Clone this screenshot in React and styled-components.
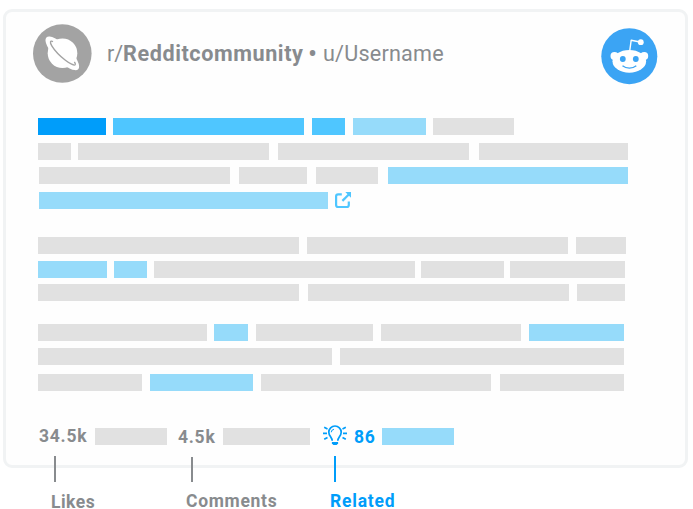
import React from "react";
import styled, { createGlobalStyle } from "styled-components";

const GlobalStyle = createGlobalStyle`
  * { box-sizing: border-box; }
  body { margin: 0; background: #fff; }
`;

const tones = { grey: "#e1e1e1", pale: "#96dbfa", sky: "#4fc6ff", blue: "#009dfa" };

const Page = styled.main`
  width: 693px;
  height: 509px;
  padding: 9px 0 0 3px;
  font-family: Roboto, "Liberation Sans", sans-serif;
  color: #888b8e;
`;
const Card = styled.article`
  width: 685px;
  height: 459px;
  border: 3px solid #f1f3f4;
  border-radius: 9px;
  background: #fefefe;
`;
const Header = styled.header`
  display: flex;
  height: 106px;
  padding: 12px 27px 0 27px;
`;
const Title = styled.h1`
  display: flex;
  margin: 17px 0 0 15px;
  font-size: 21.6px;
  line-height: 26px;
  font-weight: 400;
  white-space: pre;
`;
const Part = styled.span`
  width: ${(p) => p.$w}px;
  letter-spacing: ${(p) => p.$ls || 0}px;
  font-weight: ${(p) => (p.$bold ? 700 : 400)};
`;
const Dot = styled(Part)`
  font-size: 27px;
`;
const RedditSlot = styled.div`
  margin: 4px 0 0 auto;
`;
const Line = styled.div`
  display: flex;
  height: 17px;
  margin: 0 0 ${(p) => p.$after}px 32px;
`;
const Bar = styled.span`
  flex: none;
  width: ${(p) => p.$w}px;
  height: 17px;
  margin-left: ${(p) => p.$gap}px;
  background: ${(p) => tones[p.$tone || "grey"]};
`;
const LinkIcon = styled.svg`
  display: block;
  margin-left: 7px;
`;
const Stats = styled.footer`
  display: flex;
  height: 17px;
  margin: 37px 0 0 33px;
`;
const Count = styled.strong`
  flex: none;
  width: ${(p) => p.$w}px;
  margin-top: ${(p) => p.$top || 0}px;
  margin-left: ${(p) => p.$gap || 0}px;
  font-size: 17.5px;
  line-height: 17px;
  letter-spacing: 0.75px;
  color: ${(p) => (p.$active ? tones.blue : "inherit")};
  white-space: nowrap;
`;
const Bulb = styled.svg`
  flex: none;
  margin: -3px 6px 0 12px;
`;
const Callouts = styled.div`
  display: grid;
  grid-template-columns: 135px 144px 100px;
  margin: -12px 0 0 48px;
`;
const Callout = styled.div`
  position: relative;
  color: ${(p) => (p.$active ? tones.blue : "inherit")};
`;
const Stem = styled.div`
  width: 2px;
  height: ${(p) => p.$h}px;
  margin: ${(p) => 26 - p.$h}px 0 0 ${(p) => p.$x}px;
  background: currentColor;
`;
const Label = styled.div`
  margin-top: ${(p) => p.$top}px;
  font-size: 17.5px;
  font-weight: 700;
  line-height: 14px;
  letter-spacing: ${(p) => p.$ls || 0}px;
`;

const lines = [
  { after: 8, bars: [[0, 68, "blue"], [7, 191.4, "sky"], [7.6, 33, "sky"], [8, 73, "pale"], [7, 81]] },
  { after: 7, bars: [[0, 33], [7, 191.4], [8.6, 191.4], [9.6, 149]] },
  { after: 8, bars: [[1, 191.4], [8.6, 68], [9, 62], [10, 240, "pale"]] },
  { after: 28, bars: [[1, 289, "pale"]], link: true },
  { after: 7, bars: [[0, 261], [8, 261], [8, 50]] },
  { after: 6, bars: [[0, 69, "pale"], [7, 33, "pale"], [7, 261], [6, 83], [6, 115]] },
  { after: 23, bars: [[0, 261], [9, 261], [8, 48]] },
  { after: 7, bars: [[0, 169], [7, 34, "pale"], [8, 117], [8, 140], [8, 95, "pale"]] },
  { after: 9, bars: [[0, 294], [7.5, 284.5]] },
  { after: 0, bars: [[0, 104], [8, 103, "pale"], [8, 230], [9, 124]] },
];

function Planet() {
  return (
    <svg width="59" height="59" viewBox="0 0 59 59" fill="none">
      <circle cx="29.3" cy="29.5" r="29.3" fill="#a3a3a3" />
      <circle cx="29.5" cy="29.3" r="14.8" fill="#fff" />
      <ellipse cx="29.3" cy="29.3" rx="22.5" ry="7.8" transform="rotate(45 29.3 29.3)" fill="#fff" />
      <path d="M20 17.6C17.2 16.2 16.6 18.2 18.8 21.8C21.6 26.4 26.8 31.9 32.4 36.2C36.8 39.6 41.4 42 42.2 40.6C42.6 39.8 42 38.7 41.4 37.8" stroke="#a3a3a3" strokeWidth="1.4" />
    </svg>
  );
}

function Alien() {
  return (
    <svg width="57" height="57" viewBox="0 0 57 57" fill="none">
      <circle cx="28.3" cy="28.2" r="28" fill="#3ba4f4" />
      <path d="M28.7 23L30.2 12.2L39 14" stroke="#fff" strokeWidth="1.4" strokeLinejoin="round" />
      <circle cx="39.8" cy="14.2" r="2.9" fill="#fff" />
      <circle cx="13.5" cy="28" r="4" fill="#fff" />
      <circle cx="43.2" cy="28" r="4" fill="#fff" />
      <ellipse cx="28.3" cy="33.3" rx="16.8" ry="11.4" fill="#fff" />
      <ellipse cx="21.8" cy="31" rx="2.9" ry="3" fill="#3ba4f4" />
      <ellipse cx="34.8" cy="31" rx="2.9" ry="3" fill="#3ba4f4" />
      <path d="M21.5 37.8C25.3 40.9 31.5 40.9 35.3 37.8" stroke="#3ba4f4" strokeWidth="1.4" />
    </svg>
  );
}

export default function App() {
  return (
    <Page>
      <GlobalStyle />
      <Card>
        <Header>
          <Planet />
          <Title>
            <Part $w={16}>r/</Part>
            <Part $bold $w={185} $ls={0.58}>Redditcommunity</Part>
            <Dot $w={15}>•</Dot>
            <Part $w={122} $ls={0.2}>u/Username</Part>
          </Title>
          <RedditSlot><Alien /></RedditSlot>
        </Header>
        {lines.map((line, i) => (
          <Line key={i} $after={line.after}>
            {line.bars.map(([gap, w, tone], j) => <Bar key={j} $gap={gap} $w={w} $tone={tone} />)}
            {line.link && (
              <LinkIcon width="17" height="17" viewBox="0 0 17 17" fill="none" stroke={tones.sky} strokeWidth="2.2">
                <path d="M6.8 2.3H3.1Q1.1 2.3 1.1 4.3V13Q1.1 15 3.1 15H11.8Q13.8 15 13.8 13V9.5" />
                <path d="M7.4 8.9L14 2.3" />
                <path d="M10.3 0H16V5.7Z" fill={tones.sky} stroke="none" />
              </LinkIcon>
            )}
          </Line>
        ))}
        <Stats>
          <Count $w={56}>34.5k</Count>
          <Bar $gap={0} $w={72} />
          <Count $gap={11} $w={45} $top={1}>4.5k</Count>
          <Bar $gap={0} $w={87} />
          <Bulb width="26" height="22" viewBox="0 0 26 22" fill="none" stroke={tones.blue} strokeWidth="1.7">
            <path d="M10.2 15.8C10.2 12.2 6.8 11.3 6.8 7.2A6.2 6.2 0 0 1 19.2 7.2C19.2 11.3 15.8 12.2 15.8 15.8" />
            <path d="M9.2 7.2Q9.5 4.8 12 4.3" strokeWidth="1.1" />
            <path d="M9.9 16.9H16.1V18.4L14.6 20H11.4L9.9 18.4Z" fill={tones.blue} stroke="none" />
            <path d="M1 8.3H5M21 8.3H25M2.2 2.2L5.5 3.9M23.8 2.2L20.5 3.9M2.2 14.2L5.5 12.4M23.8 14.2L20.5 12.4" />
          </Bulb>
          <Count $w={28} $top={1} $active>86</Count>
          <Bar $gap={0} $w={72} $tone="pale" />
        </Stats>
      </Card>
      <Callouts>
        <Callout><Stem $h={26} $x={3} /><Label $top={13} $ls={0.5}>Likes</Label></Callout>
        <Callout><Stem $h={25} $x={5} /><Label $top={12} $ls={0.7}>Comments</Label></Callout>
        <Callout $active><Stem $h={26} $x={4} /><Label $top={12} $ls={0.8}>Related</Label></Callout>
      </Callouts>
    </Page>
  );
}
